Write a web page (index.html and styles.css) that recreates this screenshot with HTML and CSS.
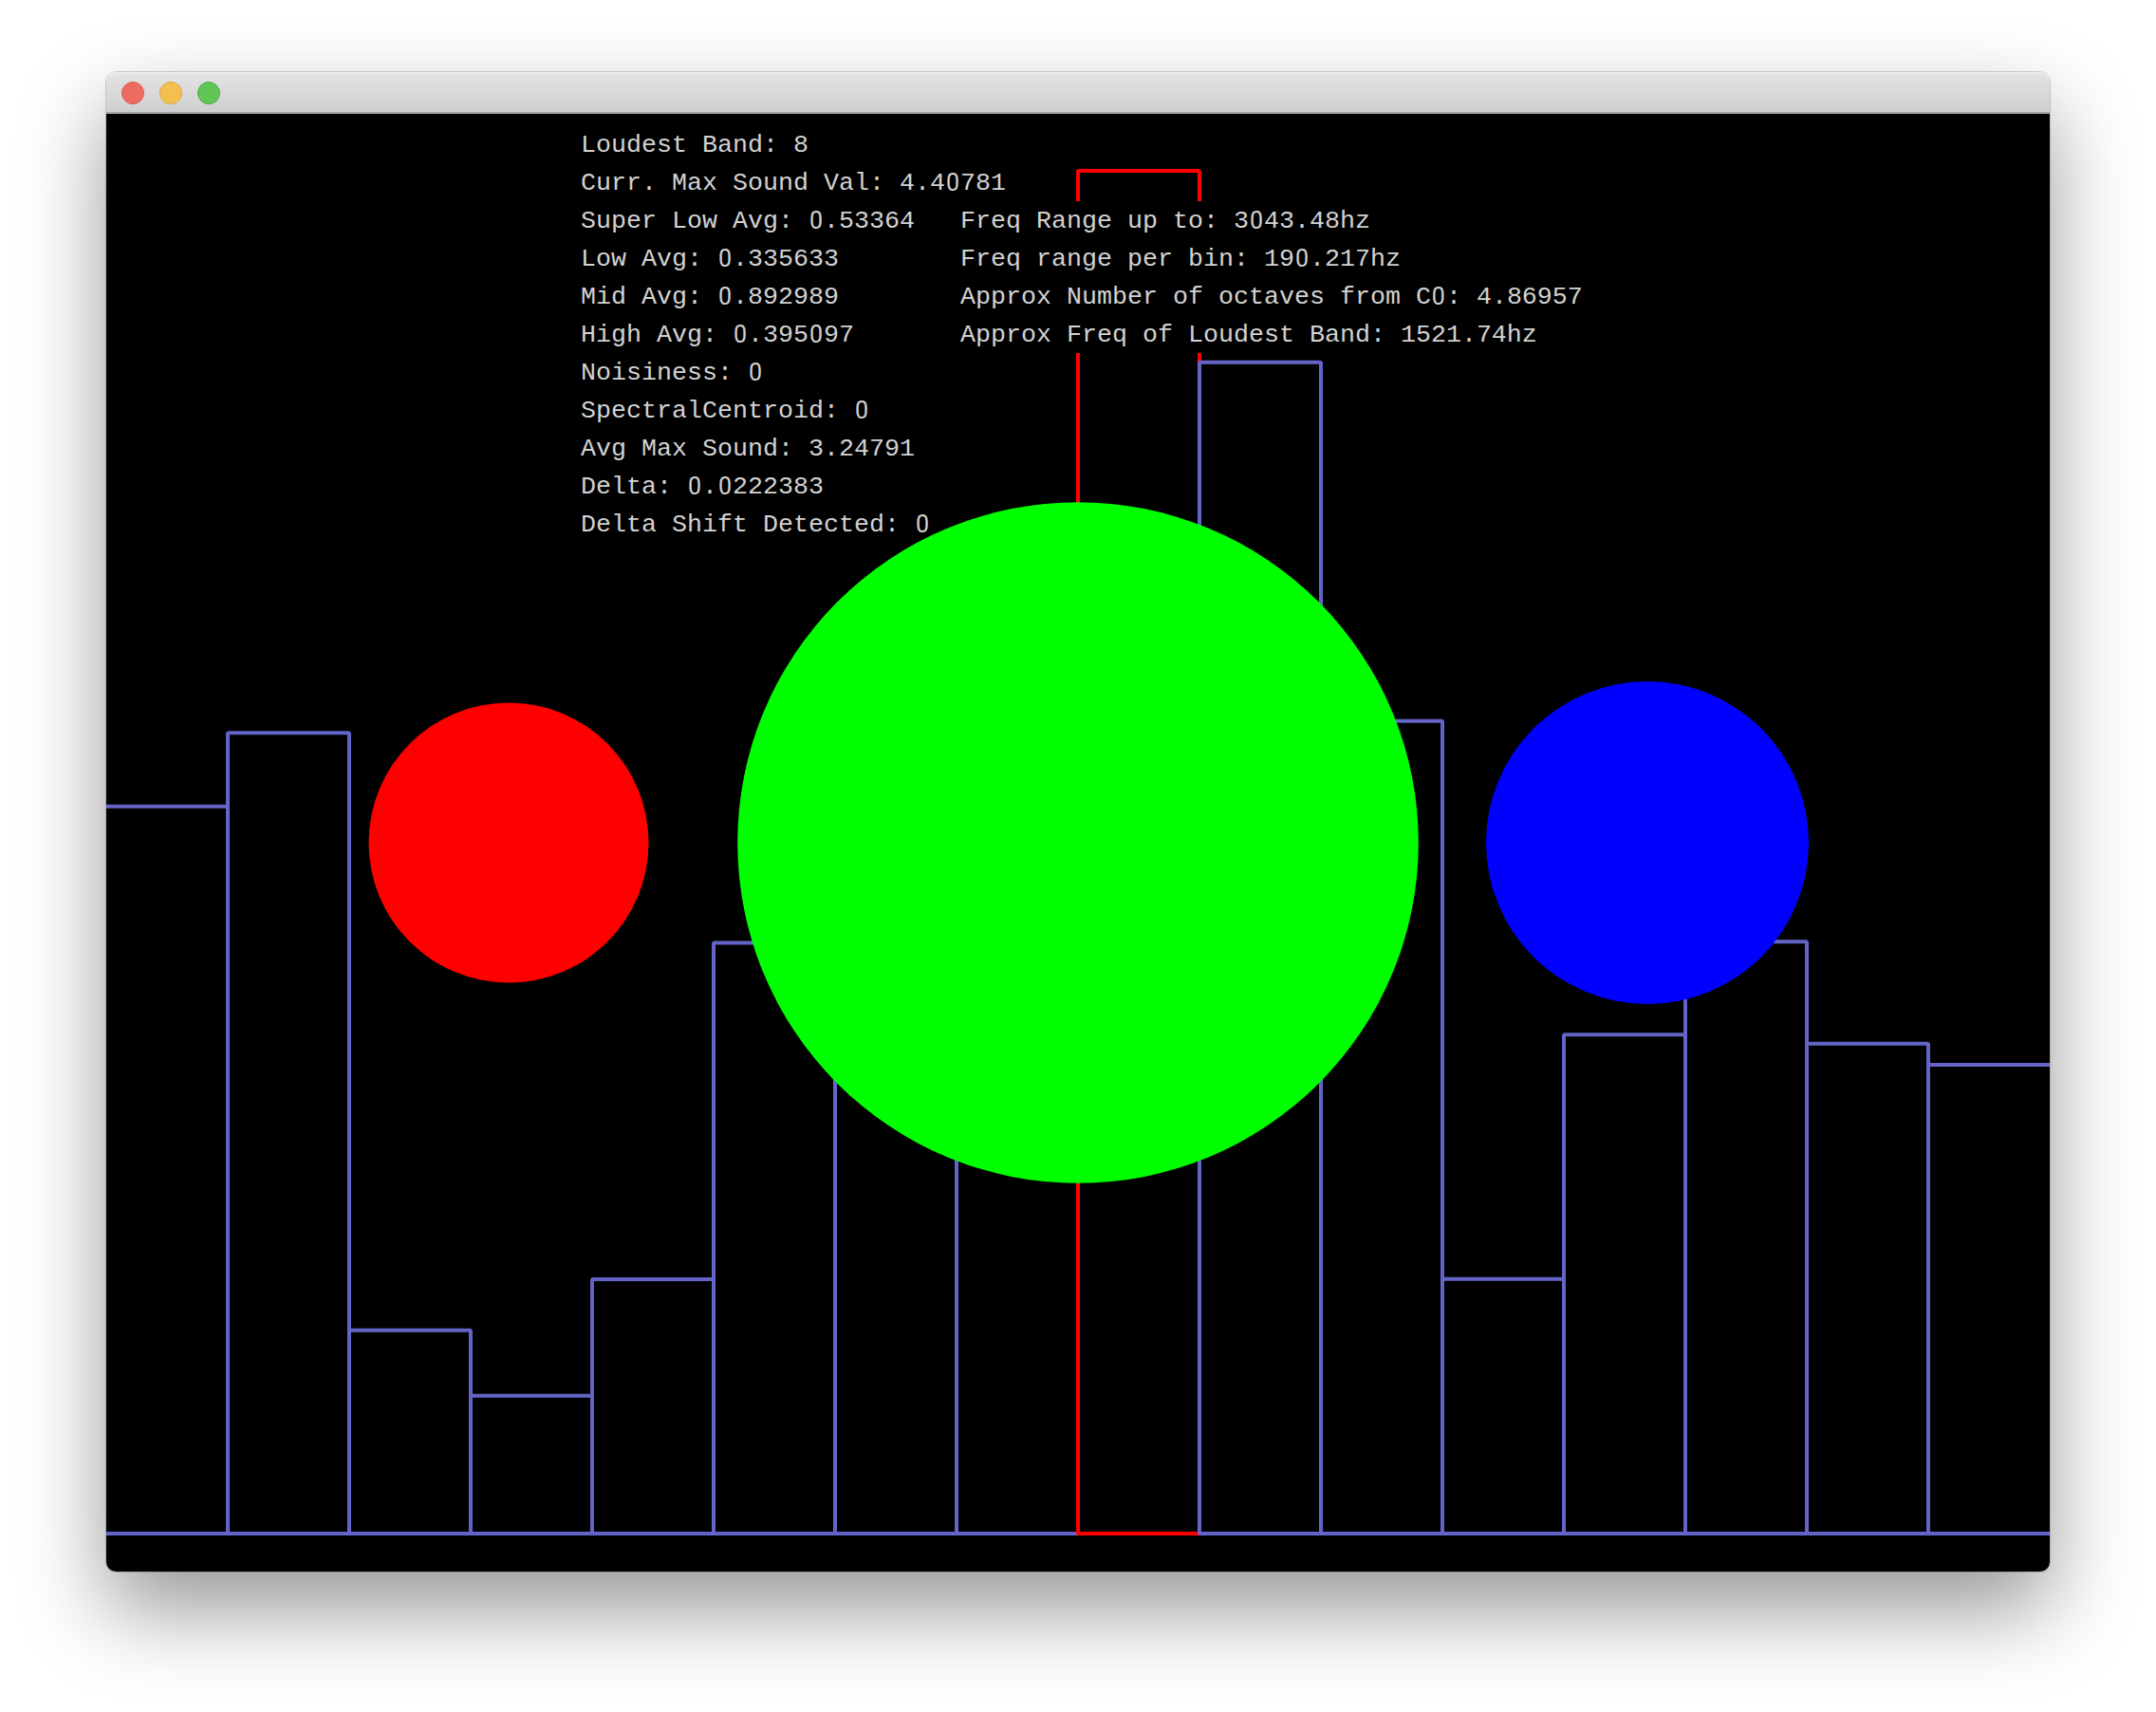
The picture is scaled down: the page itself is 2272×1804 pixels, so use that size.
FILE: index.html
```html
<!DOCTYPE html>
<html lang="en">
<head>
<meta charset="utf-8">
<title>Sound Bands</title>
<link rel="stylesheet" href="styles.css">
</head>
<body>
<main class="window">
  <header class="titlebar">
    <span class="light close"></span>
    <span class="light minimize"></span>
    <span class="light zoom"></span>
  </header>
  <section class="stage">
    <svg class="layer" viewBox="0 0 2048 1536">
      <g class="bars">
        <path d="M-8 1496V729.7H128V1496Z"/>
        <rect x="128" y="652.3" width="128" height="843.7"/>
        <rect x="256" y="1281.7" width="128" height="214.3"/>
        <rect x="384" y="1350.7" width="128" height="145.3"/>
        <rect x="512" y="1228" width="128" height="268"/>
        <rect x="640" y="873.6" width="128" height="622.4"/>
        <rect x="768" y="900" width="128" height="596"/>
        <rect x="896" y="940" width="128" height="556"/>
        <rect class="loudest" x="1024" y="60" width="128" height="1436"/>
        <rect x="1152" y="261.7" width="128" height="1234.3"/>
        <rect x="1280" y="639.8" width="128" height="856.2"/>
        <rect x="1408" y="1227.7" width="128" height="268.3"/>
        <rect x="1536" y="970.3" width="128" height="525.7"/>
        <rect x="1664" y="872.3" width="128" height="623.7"/>
        <rect x="1792" y="979.7" width="128" height="516.3"/>
        <path d="M2056 1496V1002H1920V1496Z"/>
      </g>
    </svg>
    <div class="readout">
      <div class="column">
        <p>Loudest Band: 8</p>
        <p>Curr. Max Sound Val: 4.4<i>0</i>781</p>
        <p>Super Low Avg: <i>0</i>.53364</p>
        <p>Low Avg: <i>0</i>.335633</p>
        <p>Mid Avg: <i>0</i>.892989</p>
        <p>High Avg: <i>0</i>.395<i>0</i>97</p>
        <p>Noisiness: <i>0</i></p>
        <p>SpectralCentroid: <i>0</i></p>
        <p>Avg Max Sound: 3.24791</p>
        <p>Delta: <i>0</i>.<i>0</i>222383</p>
        <p>Delta Shift Detected: <i>0</i></p>
      </div>
      <div class="column frequencies">
        <p>Freq Range up to: 3<i>0</i>43.48hz</p>
        <p>Freq range per bin: 19<i>0</i>.217hz</p>
        <p>Approx Number of octaves from C<i>0</i>: 4.86957</p>
        <p>Approx Freq of Loudest Band: 1521.74hz</p>
      </div>
    </div>
    <svg class="layer" viewBox="0 0 2048 1536">
      <circle cx="424" cy="768" r="147.5" fill="#f00"/>
      <circle cx="1024" cy="768" r="358.8" fill="#0f0"/>
      <circle cx="1624" cy="768" r="170" fill="#00f"/>
    </svg>
  </section>
</main>
</body>
</html>
```
FILE: styles.css
```css
body {
  margin: 0;
  padding: 76px 112px 148px;
  background: #fff;
  box-sizing: border-box;
  height: 1804px;
  overflow: hidden;
}

.window {
  width: 2048px;
  border-radius: 11px 11px 10px 10px;
  box-shadow: 0 0 0 1px rgba(0, 0, 0, 0.17), 0 40px 90px rgba(0, 0, 0, 0.41);
}

.titlebar {
  box-sizing: border-box;
  height: 44px;
  padding: 0 16px;
  display: flex;
  align-items: center;
  gap: 16px;
  border-radius: 10px 10px 0 0;
  background: linear-gradient(#e4e4e4, #cecece);
  box-shadow: inset 0 2px 0 #ececec, inset 0 -2px 0 #a6a6a6;
}

.light {
  box-sizing: border-box;
  width: 24px;
  height: 24px;
  border-radius: 50%;
  border: 1.5px solid;
}

.close { background: #ee6b60; border-color: #dc5a50; }
.minimize { background: #f5bf4f; border-color: #dfa63d; }
.zoom { background: #61c655; border-color: #4fac42; }

.stage {
  display: grid;
  height: 1536px;
  background: #000;
  border-radius: 0 0 10px 10px;
  overflow: hidden;
}

.stage > * { grid-area: 1 / 1; }

.layer {
  display: block;
  width: 2048px;
  height: 1536px;
}

.bars {
  fill: #000;
  stroke: #6464c8;
  stroke-width: 4;
  stroke-linejoin: bevel;
}

.bars .loudest { stroke: #f00; }

.readout {
  display: grid;
  grid-template-columns: 400px max-content;
  align-content: start;
  align-items: start;
  padding: 12px 0 0 500px;
}

.column p {
  width: max-content;
  height: 40px;
  margin: 0;
  background: #000;
  color: #d2d2d2;
  font: 26.66px/42px "Liberation Mono", monospace;
  white-space: pre;
}

.frequencies { padding-top: 80px; }

/* Undotted zero, kept on the 16px character grid */
.column i {
  display: inline-block;
  width: 16px;
  height: 42px;
  vertical-align: top;
  text-align: center;
  font: 400 25px/42px Roboto, sans-serif;
}
```
